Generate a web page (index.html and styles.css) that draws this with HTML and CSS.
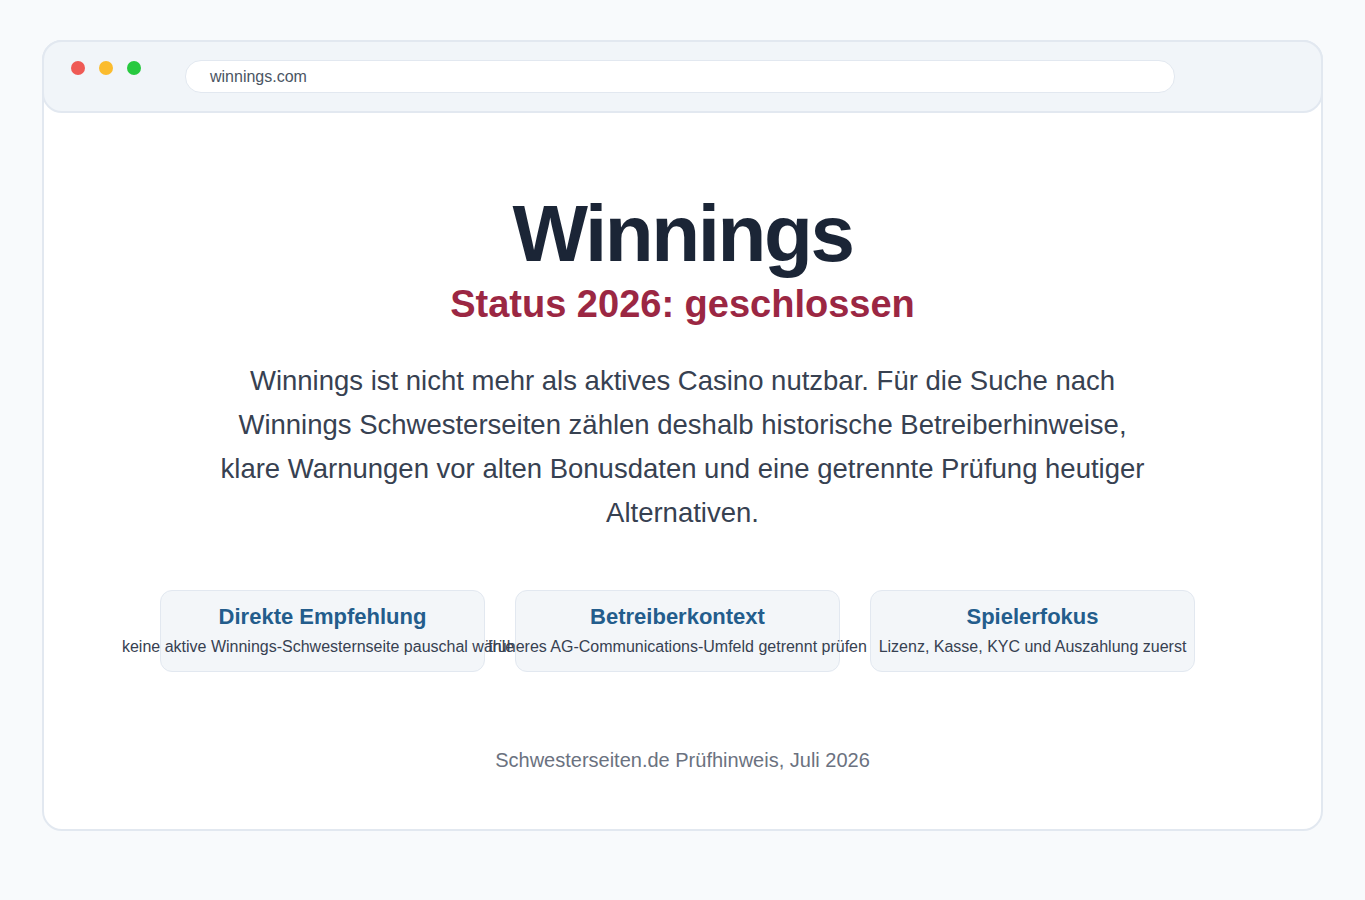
FILE: index.html
```html
<!DOCTYPE html>
<html lang="de">
<head>
<meta charset="utf-8">
<title>Winnings</title>
<link rel="stylesheet" href="styles.css">
</head>
<body>
<div class="window">
  <div class="chrome">
    <div class="dots">
      <span class="dot red"></span>
      <span class="dot yellow"></span>
      <span class="dot green"></span>
    </div>
    <div class="url">winnings.com</div>
  </div>
  <main class="content">
    <h1 class="title">Winnings</h1>
    <h2 class="status">Status 2026: geschlossen</h2>
    <p class="lead">Winnings ist nicht mehr als aktives Casino nutzbar. Für die Suche nach Winnings Schwesterseiten zählen deshalb historische Betreiberhinweise, klare Warnungen vor alten Bonusdaten und eine getrennte Prüfung heutiger Alternativen.</p>
    <div class="cards">
      <div class="card">
        <div class="card-title">Direkte Empfehlung</div>
        <div class="card-text">keine aktive Winnings-Schwesternseite pauschal wählen</div>
      </div>
      <div class="card">
        <div class="card-title">Betreiberkontext</div>
        <div class="card-text">früheres AG-Communications-Umfeld getrennt prüfen</div>
      </div>
      <div class="card">
        <div class="card-title">Spielerfokus</div>
        <div class="card-text">Lizenz, Kasse, KYC und Auszahlung zuerst</div>
      </div>
    </div>
    <p class="note">Schwesterseiten.de Prüfhinweis, Juli 2026</p>
  </main>
</div>
</body>
</html>
```

FILE: styles.css
```css
* { box-sizing: border-box; }
html, body { margin: 0; padding: 0; }
body {
  background: #f8fafc;
  font-family: "Liberation Sans", Arial, sans-serif;
  padding: 40px 42px 0;
}
.window {
  height: 791px;
  background: #ffffff;
  border: 2px solid #e2e8f0;
  border-radius: 20px;
  display: flex;
  flex-direction: column;
}
.chrome {
  margin: -2px -2px 0;
  height: 73px;
  background: #f1f5f9;
  border: 2px solid #e2e8f0;
  border-radius: 20px;
  display: flex;
  align-items: flex-start;
  padding: 0 27px;
}
.dots {
  display: flex;
  gap: 14px;
  margin-top: 19px;
}
.dot {
  width: 14px;
  height: 14px;
  border-radius: 50%;
  display: block;
}
.red { background: #ef5a55; }
.yellow { background: #fbbc2e; }
.green { background: #27c93f; }
.url {
  margin-top: 18px;
  margin-left: 44px;
  width: 990px;
  height: 33px;
  background: #ffffff;
  border: 1px solid #e2e8f0;
  border-radius: 16px;
  padding: 0 24px;
  font-size: 16px;
  line-height: 31px;
  color: #4b5563;
}
.content {
  display: flex;
  flex-direction: column;
  align-items: center;
  padding-top: 81px;
}
.title {
  margin: 0;
  font-size: 80px;
  line-height: 80px;
  font-weight: 700;
  letter-spacing: -0.03em;
  color: #1b2536;
}
.status {
  margin: 7px 0 0;
  font-size: 38px;
  line-height: 46px;
  font-weight: 700;
  color: #9b2743;
}
.lead {
  margin: 32px 0 0;
  max-width: 930px;
  font-size: 27.5px;
  line-height: 44px;
  text-align: center;
  color: #374151;
}
.cards {
  margin-top: 55px;
  margin-right: 10px;
  display: flex;
  gap: 30px;
}
.card {
  width: 325px;
  height: 82px;
  background: #f3f6f9;
  border: 1px solid #e2e8f0;
  border-radius: 12px;
  display: flex;
  flex-direction: column;
  align-items: center;
  padding-top: 13px;
}
.card-title {
  font-size: 22px;
  line-height: 26px;
  font-weight: 700;
  color: #235d8c;
  white-space: nowrap;
}
.card-text {
  margin-top: 6px;
  font-size: 16px;
  line-height: 22px;
  color: #374151;
  white-space: nowrap;
}
.note {
  margin: 73px 0 0;
  font-size: 20px;
  line-height: 30px;
  color: #6b7280;
}
```
